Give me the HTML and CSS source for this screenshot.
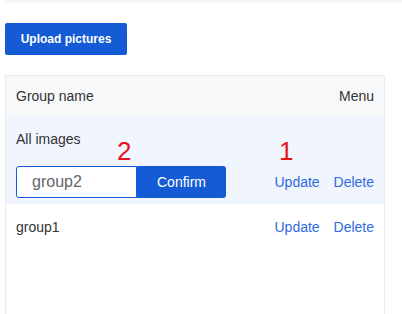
FILE: index.html
```html
<!DOCTYPE html>
<html lang="en">
<head>
    <meta charset="UTF-8">
    <meta name="viewport" content="width=device-width, initial-scale=1.0">
    <title>Groups</title>
    <link rel="stylesheet" href="styles.css">
</head>
<body>
    <div class="top-bar"></div>
    <button class="upload-button">Upload pictures</button>

    <!-- Lista de grupos -->
    <div class="group-panel">
        <div class="group-head">
            <span>Group name</span>
            <span>Menu</span>
        </div>
        <div class="group-row active">
            <div class="group-name">All images</div>
            <div class="group-line">
                <div class="rename-form">
                    <input type="text" class="rename-input" value="group2">
                    <button class="rename-button">Confirm</button>
                </div>
                <div class="group-actions">
                    <a href="#">Update</a>
                    <a href="#">Delete</a>
                </div>
            </div>
            <span class="mark mark-two">2</span>
            <span class="mark mark-one">1</span>
        </div>
        <div class="group-row">
            <div class="group-line">
                <span>group1</span>
                <div class="group-actions">
                    <a href="#">Update</a>
                    <a href="#">Delete</a>
                </div>
            </div>
        </div>
    </div>
</body>
</html>
```

FILE: styles.css
```css
body { margin: 0; font-family: "Liberation Sans", Arial, sans-serif; font-size: 14px; color: #333; background: #fff; overflow: hidden; }
.top-bar { height: 3px; margin-left: 5px; background-color: #f5f6f8; }
.upload-button { display: block; margin: 20px 0 0 5px; width: 122px; height: 32px; border: none; border-radius: 2px; background-color: #155bd5; color: white; font-family: inherit; font-size: 12px; font-weight: bold; padding: 0; }
.group-panel { margin: 20px 0 0 5px; width: 378px; height: 260px; border: 1px solid #e8eaee; }
.group-head { display: flex; justify-content: space-between; align-items: center; height: 40px; padding: 0 10px; background-color: #f7f8fa; }
.group-row { position: relative; padding: 0 10px; }
.group-row.active { background-color: #f0f5fe; padding-top: 12px; height: 76px; }
.group-name { line-height: 22px; }
.group-line { display: flex; justify-content: space-between; align-items: center; height: 46px; }
.group-row.active .group-line { margin-top: 16px; height: 32px; }
.rename-form { display: flex; }
.rename-input { width: 104px; height: 30px; margin: 0; padding: 0 0 0 15px; border: 1px solid #155bd5; border-radius: 3px 0 0 3px; font-family: inherit; font-size: 16px; color: #666; background: white; outline: none; }
.rename-button { width: 89px; height: 32px; margin: 0; border: none; border-radius: 0 3px 3px 0; background-color: #155bd5; color: white; font-family: inherit; font-size: 14px; padding: 0; }
.group-actions a { color: #2f6ae0; text-decoration: none; margin-left: 10px; }
.mark { position: absolute; top: 22px; color: #e8141c; font-size: 26px; line-height: 1; }
.mark-two { left: 111px; }
.mark-one { left: 273px; }
```
